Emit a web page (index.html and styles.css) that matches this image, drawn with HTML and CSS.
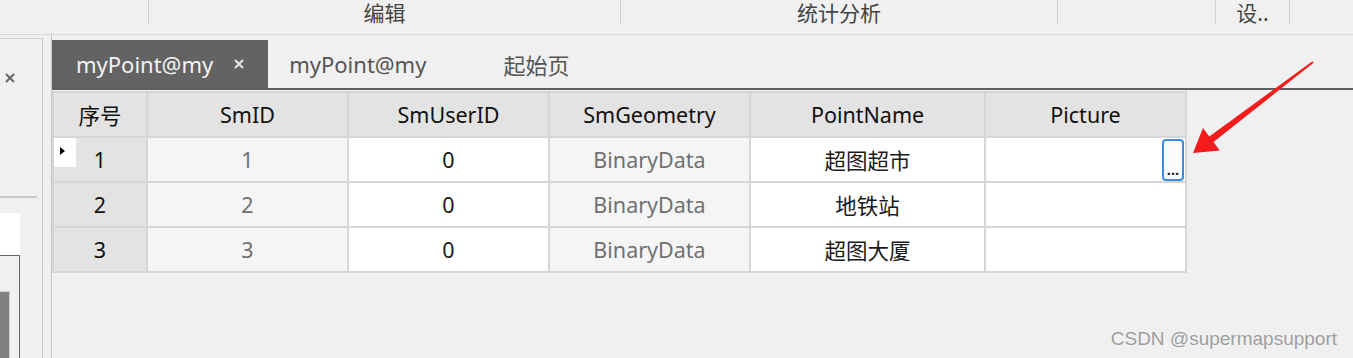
FILE: index.html
```html
<!DOCTYPE html>
<html lang="zh-CN">
  <head>
    <meta charset="UTF-8" />
    <title>属性表</title>
    <link rel="stylesheet" href="styles.css">
  </head>
  <body>
    <div class="ribbon">
      <div class="group g-first"></div>
      <div class="group g-edit"><span>编辑</span></div>
      <div class="group g-stat"><span>统计分析</span></div>
      <div class="group g-blank"></div>
      <div class="group g-set"><span>设..</span></div>
    </div>

    <div class="workspace">
      <aside class="side">
        <svg class="side-close" width="10" height="10" viewBox="0 0 10 10">
          <path d="M1 1 L9 9 M9 1 L1 9" stroke="#666" stroke-width="2" />
        </svg>
        <div class="side-rule"></div>
        <div class="side-white"></div>
        <div class="side-box">
          <div class="side-thumb"></div>
        </div>
      </aside>

      <main class="main">
        <div class="tabs">
          <div class="tab active">
            <span>myPoint@my</span>
            <svg class="tab-x" width="12" height="12" viewBox="0 0 12 12">
              <path d="M2 2 L10 10 M10 2 L2 10" stroke="#e8e8e8" stroke-width="2" />
            </svg>
          </div>
          <div class="tab">
            <span>myPoint@my</span>
            <span class="tab-x hidden"></span>
          </div>
          <div class="tab">
            <span>起始页</span>
          </div>
        </div>

        <table class="grid">
          <colgroup>
            <col style="width: 94px">
            <col style="width: 201px">
            <col style="width: 201px">
            <col style="width: 201px">
            <col style="width: 235px">
            <col style="width: 201px">
          </colgroup>
          <thead>
            <tr>
              <th>序号</th>
              <th>SmID</th>
              <th>SmUserID</th>
              <th>SmGeometry</th>
              <th>PointName</th>
              <th>Picture</th>
            </tr>
          </thead>
          <tbody>
            <tr>
              <td class="row-head current"><span class="row-mark"></span>1</td>
              <td class="readonly">1</td>
              <td>0</td>
              <td class="readonly">BinaryData</td>
              <td>超图超市</td>
              <td class="pic-cell">
                <div class="pic-edit">
                  <button class="ellipsis">...</button>
                </div>
              </td>
            </tr>
            <tr>
              <td class="row-head">2</td>
              <td class="readonly">2</td>
              <td>0</td>
              <td class="readonly">BinaryData</td>
              <td>地铁站</td>
              <td></td>
            </tr>
            <tr>
              <td class="row-head">3</td>
              <td class="readonly">3</td>
              <td>0</td>
              <td class="readonly">BinaryData</td>
              <td>超图大厦</td>
              <td></td>
            </tr>
          </tbody>
        </table>
      </main>
    </div>

    <!-- annotation arrow -->
    <svg class="arrow" width="1353" height="358" viewBox="0 0 1353 358">
      <polygon
        points="1193,153 1219.8,150.4 1213.5,142 1313.6,62.8 1312.4,61.2 1209.3,136.4 1203,128"
        fill="#f31b1b"
      />
    </svg>

    <div class="watermark">CSDN @supermapsupport</div>
  </body>
</html>
```

FILE: styles.css
```css
body {
  margin: 0;
  width: 1353px;
  height: 358px;
  overflow: hidden;
  position: relative;
  background-color: #f0f0f0;
  font-family: "Noto Sans", "Noto Sans CJK SC", sans-serif;
  color: #1a1a1a;
}

/* ribbon group captions */
.ribbon {
  display: flex;
  height: 34px;
  border-bottom: 1px solid #d9d9d9;
}
.group {
  box-sizing: border-box;
  height: 24px;
  border-right: 1px solid #d2d2d2;
  display: flex;
  justify-content: center;
  align-items: flex-start;
  font-size: 21px;
  color: #444;
}
.group span {
  display: block;
  height: 24px;
  line-height: 24px;
  margin-top: 1px;
}
.g-first { width: 149px; }
.g-edit { width: 472px; }
.g-stat { width: 437px; }
.g-blank { width: 158px; }
.g-set { width: 74px; }

.workspace {
  display: flex;
  height: 323px;
}

/* left docked panel */
.side {
  width: 42px;
  margin-top: 3px;
  border-top: 1px solid #cfcfcf;
  border-right: 1px solid #c4c4c4;
  display: flex;
  flex-direction: column;
}
.side-close {
  margin: 34px 0 0 5px;
}
.side-rule {
  width: 37px;
  margin-top: 113px;
  border-top: 2px solid #cacaca;
}
.side-white {
  width: 20px;
  height: 42px;
  margin-top: 15px;
  background-color: #fff;
}
.side-box {
  flex: 1;
  width: 19px;
  border-top: 1px solid #666;
  border-right: 1px solid #666;
  padding-top: 35px;
  display: flex;
}
.side-thumb {
  width: 9px;
  background-color: #808080;
  border-top: 1px solid #cfcfcf;
  border-right: 1px solid #cfcfcf;
}

/* main document area */
.main {
  flex: 1;
  margin-left: 8px;
  border-left: 1px solid #c4c4c4;
  padding-top: 5px;
}
.tabs {
  display: flex;
  height: 48px;
  border-bottom: 2px solid #5f5f5f;
}
.tab {
  display: flex;
  align-items: center;
  gap: 20px;
  padding: 0 24px 0 21px;
  font-size: 22px;
  color: #555;
}
.tab.active {
  padding: 0 23px 0 24px;
  background-color: #636363;
  color: #f3f3f3;
}
.tab-x {
  width: 12px;
}
.tab-x.hidden {
  display: inline-block;
  height: 12px;
}

/* attribute grid */
.grid {
  margin: 1px 0 0 0;
  border-collapse: collapse;
  table-layout: fixed;
  width: 1133px;
  font-size: 21.5px;
}
.grid th,
.grid td {
  height: 43px;
  padding: 0;
  border: 2px solid #d6d6d6;
  text-align: center;
  background-color: #fff;
  font-weight: normal;
}
.grid th {
  background-color: #e3e3e3;
  color: #111;
}
.grid td.row-head {
  background-color: #e3e3e3;
  color: #111;
}
.grid td.readonly {
  background-color: #f5f5f5;
  color: #707070;
}
.current {
  position: relative;
}
.row-mark {
  position: absolute;
  left: 0;
  top: 0;
  width: 22px;
  height: 29px;
  background-color: #fff;
}
.row-mark::after {
  content: "";
  position: absolute;
  left: 6px;
  top: 9px;
  border-left: 5px solid #000;
  border-top: 4px solid transparent;
  border-bottom: 4px solid transparent;
}
.pic-edit {
  display: flex;
  justify-content: flex-end;
  padding-right: 1px;
}
.ellipsis {
  width: 22px;
  height: 42px;
  padding: 0 0 4px;
  border: 2px solid #3d8ee3;
  border-radius: 4px;
  background-color: #fbfbfb;
  display: flex;
  align-items: flex-end;
  justify-content: center;
  font-family: "Liberation Sans", sans-serif;
  font-size: 15px;
  font-weight: bold;
  line-height: 10px;
  color: #222;
}

.arrow {
  position: absolute;
  top: 0;
  left: 0;
  pointer-events: none;
}
.watermark {
  position: absolute;
  right: 16px;
  bottom: 8px;
  font-family: "Liberation Sans", Arial, sans-serif;
  font-size: 19px;
  color: #9c9c9c;
  text-shadow: 0 0 1px #fff;
}
```
